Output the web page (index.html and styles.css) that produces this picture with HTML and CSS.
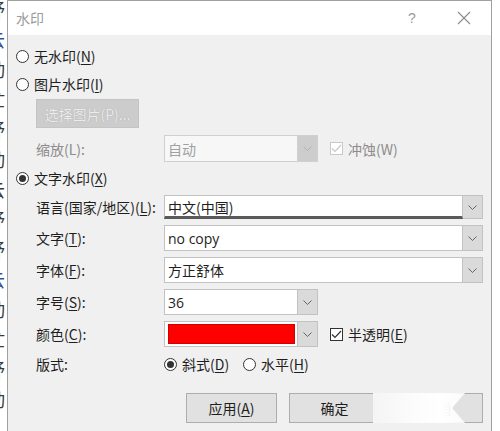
FILE: index.html
```html
<!DOCTYPE html>
<html lang="zh-CN">
<head>
    <meta charset="UTF-8">
    <title>水印</title>
    <link rel="stylesheet" href="styles.css">
</head>
<body>
<div class="screen">
    <div class="doc">
        <div class="doc-text">
            <span>抒</span><span class="link">云</span><span>动</span><span>忙</span><span>抒</span><span>动</span><span>云</span><span>抒</span><span>抒</span><span class="link">云</span><span>动</span><span>忙</span><span>抒</span><span>动</span>
        </div>
    </div>

    <div class="dialog">
        <div class="titlebar">
            <span class="title">水印</span>
            <span class="help">?</span>
            <svg class="close" width="14" height="14" viewBox="0 0 14 14">
                <path d="M1 1 L13 13 M13 1 L1 13" stroke="#8a8a8a" stroke-width="1.1" fill="none"/>
            </svg>
        </div>

        <div class="body">
            <div class="radio-row first">
                <span class="radio"></span>
                <span>无水印(<u>N</u>)</span>
            </div>
            <div class="radio-row">
                <span class="radio"></span>
                <span>图片水印(<u>I</u>)</span>
            </div>
            <div class="indent pick-row">
                <button class="btn-disabled">选择图片(P)...</button>
            </div>
            <div class="field-row scale-row">
                <span class="label muted">缩放(L):</span>
                <div class="select short disabled">
                    <div class="box">自动</div>
                    <div class="arrow"><svg width="9" height="5" viewBox="0 0 9 5"><path d="M0.5 0.5 L4.5 4.5 L8.5 0.5" stroke="#b0b0b0" fill="none"/></svg></div>
                </div>
                <span class="check disabled"><svg width="11" height="9" viewBox="0 0 11 9"><path d="M1 4.5 L4 7.5 L10 1" stroke="#c8c8c8" stroke-width="1.2" fill="none"/></svg></span>
                <span class="muted">冲蚀(W)</span>
            </div>
            <div class="radio-row text-mark">
                <span class="radio on"></span>
                <span>文字水印(<u>X</u>)</span>
            </div>
            <div class="field-row lang-row">
                <span class="label">语言(国家/地区)(<u>L</u>):</span>
                <div class="select wide">
                    <div class="box focus">中文(中国)</div>
                    <div class="arrow"><svg width="9" height="5" viewBox="0 0 9 5"><path d="M0.5 0.5 L4.5 4.5 L8.5 0.5" stroke="#666" fill="none"/></svg></div>
                </div>
            </div>
            <div class="field-row">
                <span class="label">文字(<u>T</u>):</span>
                <div class="select wide">
                    <div class="box latin">no copy</div>
                    <div class="arrow"><svg width="9" height="5" viewBox="0 0 9 5"><path d="M0.5 0.5 L4.5 4.5 L8.5 0.5" stroke="#666" fill="none"/></svg></div>
                </div>
            </div>
            <div class="field-row">
                <span class="label">字体(<u>F</u>):</span>
                <div class="select wide">
                    <div class="box">方正舒体</div>
                    <div class="arrow"><svg width="9" height="5" viewBox="0 0 9 5"><path d="M0.5 0.5 L4.5 4.5 L8.5 0.5" stroke="#666" fill="none"/></svg></div>
                </div>
            </div>
            <div class="field-row">
                <span class="label">字号(<u>S</u>):</span>
                <div class="select short">
                    <div class="box latin">36</div>
                    <div class="arrow"><svg width="9" height="5" viewBox="0 0 9 5"><path d="M0.5 0.5 L4.5 4.5 L8.5 0.5" stroke="#666" fill="none"/></svg></div>
                </div>
            </div>
            <div class="field-row">
                <span class="label">颜色(<u>C</u>):</span>
                <div class="select short">
                    <div class="box swatch-box"><span class="swatch"></span></div>
                    <div class="arrow"><svg width="9" height="5" viewBox="0 0 9 5"><path d="M0.5 0.5 L4.5 4.5 L8.5 0.5" stroke="#666" fill="none"/></svg></div>
                </div>
                <span class="check"><svg width="11" height="9" viewBox="0 0 11 9"><path d="M1 4.5 L4 7.5 L10 1" stroke="#333" stroke-width="1.2" fill="none"/></svg></span>
                <span>半透明(<u>E</u>)</span>
            </div>
            <div class="field-row layout-row">
                <span class="label">版式:</span>
                <span class="radio on"></span>
                <span class="opt">斜式(<u>D</u>)</span>
                <span class="radio second"></span>
                <span class="opt">水平(<u>H</u>)</span>
            </div>
            <div class="buttons">
                <button class="btn">应用(<u>A</u>)</button>
                <button class="btn">确定</button>
                <button class="btn">取消</button>
                <div class="fade"></div>
            </div>
        </div>
    </div>
</div>
</body>
</html>
```

FILE: styles.css
```css
* {
    box-sizing: border-box;
}
body {
    margin: 0;
    background: #fff;
    font-family: "Noto Sans CJK SC", "Liberation Sans", sans-serif;
    font-size: 14px;
    color: #1e1e1e;
}
u {
    text-decoration-thickness: 1px;
    text-underline-offset: 2px;
}
.screen {
    display: flex;
    width: 500px;
    height: 431px;
    overflow: hidden;
}

/* document peeking out behind the dialog */
.doc {
    width: 7px;
    flex: none;
    overflow: hidden;
}
.doc-text {
    display: flex;
    flex-direction: column;
    margin-left: -13px;
    margin-top: -6px;
    font-size: 18px;
    line-height: 30px;
    color: #3a3a3a;
}
.doc-text .link {
    color: #3b4fa0;
}

.dialog {
    position: relative;
    width: 485px;
    flex: none;
    background: #f0f0f0;
    border: 1px solid #a0a0a0;
    border-bottom: none;
}
.titlebar {
    display: flex;
    align-items: center;
    height: 34px;
    padding: 0 20px 0 8px;
    background: #fff;
}
.title {
    color: #9a9a9a;
    font-size: 14px;
}
.help {
    margin-left: auto;
    width: 20px;
    text-align: center;
    color: #9a9a9a;
    font-family: "Liberation Sans", sans-serif;
    font-size: 14px;
}
.close {
    margin-left: 35px;
}

.body {
    padding: 11px 8px 0 8px;
}
.radio-row {
    display: flex;
    align-items: center;
    gap: 5px;
    height: 20px;
    margin-top: 8px;
}
.radio-row.first {
    margin-top: 0;
}
.radio {
    width: 13px;
    height: 13px;
    flex: none;
    border: 1px solid #333;
    border-radius: 50%;
    background: #fff;
    display: flex;
    align-items: center;
    justify-content: center;
}
.radio.on::after {
    content: "";
    width: 7px;
    height: 7px;
    border-radius: 50%;
    background: #333;
}
.indent {
    padding-left: 20px;
}
.pick-row {
    margin-top: 5px;
}
.btn-disabled {
    width: 103px;
    height: 29px;
    border: 1px solid #c4c4c4;
    background: #cccccc;
    color: #ececec;
    text-shadow: 0 0 1px #9c9c9c;
    font-family: inherit;
    font-size: 14px;
    padding: 0;
}

.field-row {
    display: flex;
    align-items: center;
    height: 26px;
    margin-top: 6px;
    padding-left: 20px;
}
.scale-row {
    height: 27px;
    margin-top: 7px;
}
.text-mark {
    margin-top: 6px;
}
.lang-row {
    height: 24px;
    margin-top: 7px;
}
.label {
    width: 128px;
    flex: none;
}
.muted {
    color: #8c8c8c;
}
.select {
    display: flex;
    height: 100%;
    flex: none;
}
.select.wide {
    width: 319px;
}
.select.short {
    width: 154px;
}
.select .box {
    flex: 1;
    display: flex;
    align-items: center;
    padding-left: 3px;
    background: #fff;
    border: 1px solid #c2c2c2;
}
.select .box.latin {
    font-family: "Open Sans", "Liberation Sans", sans-serif;
    font-size: 14px;
}
.select .box.focus {
    border-bottom: 3px solid #5a5a5a;
    padding-top: 2px;
}
.select .arrow {
    width: 20px;
    flex: none;
    display: flex;
    align-items: center;
    justify-content: center;
    background: #dadada;
    border: 1px solid #c2c2c2;
    border-left: none;
}
.select.disabled .box {
    background: #f7f7f7;
    border-color: #d0d0d0;
    color: #a0a0a0;
}
.select.disabled .arrow {
    background: #cdcdcd;
    border-color: #d0d0d0;
}
.swatch {
    display: block;
    width: 100%;
    height: 100%;
    background: #ff0000;
    border: 1px solid #d00000;
}
.select .box.swatch-box {
    padding: 2px 2px 2px 3px;
}
.check {
    width: 13px;
    height: 13px;
    flex: none;
    margin: 0 5px 0 12px;
    border: 1px solid #333;
    background: #fff;
    display: flex;
    align-items: center;
    justify-content: center;
}
.check.disabled {
    border-color: #c8c8c8;
}

.layout-row {
    height: 20px;
    margin-top: 7px;
}
.layout-row .opt {
    margin-left: 5px;
}
.layout-row .radio.second {
    margin-left: 14px;
}

.buttons {
    position: relative;
    display: flex;
    justify-content: flex-end;
    gap: 12px;
    margin-top: 19px;
}
.btn {
    width: 91px;
    height: 30px;
    padding: 0;
    border: 1px solid #adadad;
    background: #e1e1e1;
    color: #1e1e1e;
    font-family: inherit;
    font-size: 14px;
}
.fade {
    position: absolute;
    top: 0;
    right: 18px;
    width: 92px;
    height: 30px;
    background: linear-gradient(to right, #f4f4f4 0%, #fbfbfb 40%, #ffffff 75%, rgba(255, 255, 255, 0.85) 100%);
    clip-path: polygon(0 0, 100% 0, 86% 50%, 100% 100%, 0 100%);
}
```
